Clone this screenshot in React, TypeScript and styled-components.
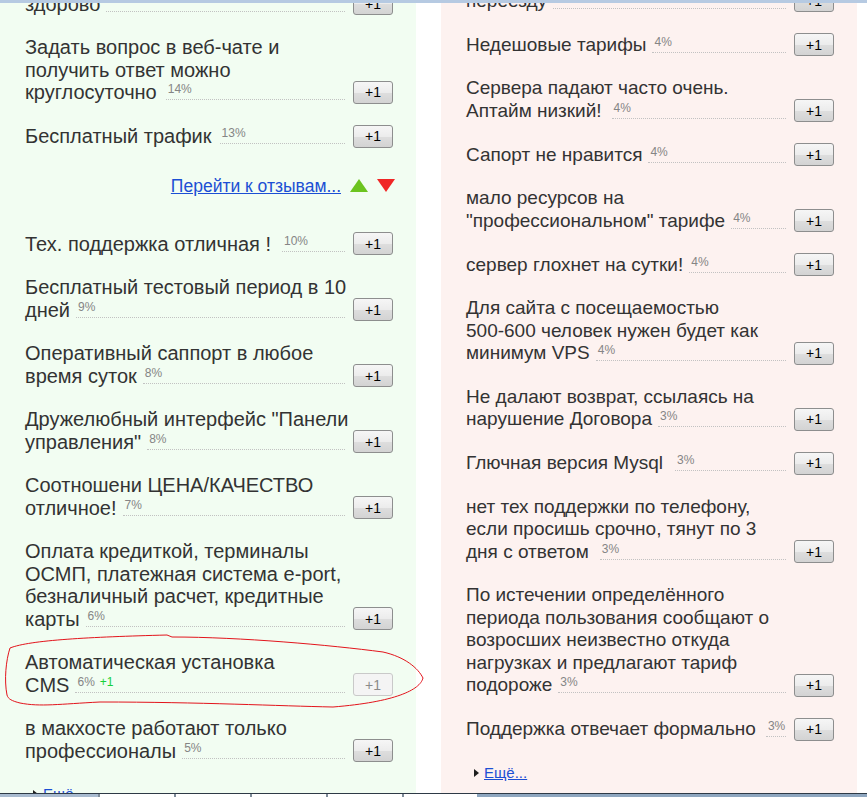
import React from "react";
import styled, { createGlobalStyle } from "styled-components";

type Item = {
  lines: string[];
  pct?: string;
  bonus?: string;
  voted?: boolean;
  sp?: number;
};

const pros: Item[] = [
  { lines: ["здорово"] },
  {
    lines: ["Задать вопрос в веб-чате и", "получить ответ можно", "круглосуточно"],
    pct: "14%",
    sp: 3,
  },
  { lines: ["Бесплатный трафик"], pct: "13%", sp: 2 },
];

const pros2: Item[] = [
  { lines: ["Тех. поддержка отличная !"], pct: "10%", sp: 5 },
  { lines: ["Бесплатный тестовый период в 10", "дней"], pct: "9%" },
  { lines: ["Оперативный саппорт в любое", "время суток"], pct: "8%" },
  { lines: ["Дружелюбный интерфейс \"Панели", "управления\""], pct: "8%" },
  { lines: ["Соотношени ЦЕНА/КАЧЕСТВО", "отличное!"], pct: "7%" },
  {
    lines: [
      "Оплата кредиткой, терминалы",
      "ОСМП, платежная система e-port,",
      "безналичный расчет, кредитные",
      "карты",
    ],
    pct: "6%",
  },
  { lines: ["Автоматическая установка", "CMS"], pct: "6%", bonus: "+1", voted: true },
  { lines: ["в макхосте работают только", "профессионалы"], pct: "5%" },
];

const cons: Item[] = [
  { lines: ["переезду"] },
  { lines: ["Недешовые тарифы"], pct: "4%" },
  { lines: ["Сервера падают часто очень.", "Аптайм низкий!"], pct: "4%", sp: 4 },
  { lines: ["Сапорт не нравится"], pct: "4%" },
  { lines: ["мало ресурсов на", "\"профессиональном\" тарифе"], pct: "4%" },
  { lines: ["сервер глохнет на сутки!"], pct: "4%" },
  {
    lines: ["Для сайта с посещаемостью", "500-600 человек нужен будет как", "минимум VPS"],
    pct: "4%",
  },
  { lines: ["Не далают возврат, ссылаясь на", "нарушение Договора"], pct: "3%" },
  { lines: ["Глючная версия Mysql"], pct: "3%", sp: 6 },
  {
    lines: ["нет тех поддержки по телефону,", "если просишь срочно, тянут по 3", "дня с ответом"],
    pct: "3%",
    sp: 5,
  },
  {
    lines: [
      "По истечении определённого",
      "периода пользования сообщают о",
      "возросших неизвестно откуда",
      "нагрузках и предлагают тариф",
      "подороже",
    ],
    pct: "3%",
  },
  { lines: ["Поддержка отвечает формально"], pct: "3%", sp: 4 },
];

const tabs = [74, 74, 74, 74, 73];

const GlobalStyle = createGlobalStyle`
  html, body {
    margin: 0;
    padding: 0;
    background: #ffffff;
  }
  body {
    font-family: "Liberation Sans", Arial, sans-serif;
  }
`;

const Page = styled.div`
  position: relative;
  width: 867px;
  height: 797px;
  overflow: hidden;
  display: flex;
  flex-direction: column;
  background: #ffffff;
`;

const TopBar = styled.div`
  height: 3px;
  flex-shrink: 0;
  background: #b6cae2;
`;

const Columns = styled.div`
  flex: 1;
  min-height: 0;
  display: flex;
  gap: 25px;
  overflow: hidden;
`;

const Panel = styled.div<{ $tone: "good" | "bad"; $scroll: number; $size: number }>`
  width: 416px;
  flex-shrink: 0;
  box-sizing: border-box;
  padding: 0 23px 0 25px;
  background: ${(p) => (p.$tone === "good" ? "#f2fdf2" : "#fdf2f0")};
  display: flex;
  flex-direction: column;
  gap: 21px;
  overflow: hidden;
  --text-size: ${(p) => p.$size}px;

  > :first-child {
    margin-top: ${(p) => -p.$scroll}px;
  }
`;

const Row = styled.div`
  display: flex;
  align-items: flex-end;
  gap: 8px;
  flex-shrink: 0;
`;

const Label = styled.div`
  flex: 1;
  min-width: 0;
  font-size: var(--text-size);
  line-height: 22.5px;
  color: #333333;
`;

const Line = styled.div`
  white-space: nowrap;
`;

const LastLine = styled.div`
  display: flex;
  align-items: flex-start;
  white-space: nowrap;
`;

const Leader = styled.span<{ $sp?: number }>`
  flex: 1;
  min-width: 20px;
  height: 19px;
  box-sizing: border-box;
  margin-left: ${(p) => 6 + (p.$sp ?? 0)}px;
  padding: 2px 0 0 2px;
  border-bottom: 1px dotted #c2c2c2;
  display: flex;
  align-items: flex-start;
  gap: 5px;
  font-size: 12px;
  line-height: 12px;
`;

const Pct = styled.span`
  color: #858585;
`;

const Bonus = styled.span`
  color: #19d03a;
`;

const Vote = styled.button<{ $voted?: boolean }>`
  flex-shrink: 0;
  width: 40px;
  height: 23px;
  padding: 0;
  box-sizing: border-box;
  font-family: "Liberation Sans", Arial, sans-serif;
  font-size: 14px;
  color: ${(p) => (p.$voted ? "#8a8a8a" : "#000000")};
  border: 1px solid ${(p) => (p.$voted ? "#c9c9c9" : "#8d8e8e")};
  border-radius: 3px;
  background: ${(p) =>
    p.$voted
      ? "#f4f4f4"
      : "linear-gradient(#f6f6f6, #ececec 50%, #dedede 51%, #d3d3d3)"};
`;

const NavRow = styled.div`
  display: flex;
  justify-content: flex-end;
  align-items: center;
  gap: 9px;
  padding: 6px 0 14px;
  margin-right: -2px;
  line-height: 22.5px;
  flex-shrink: 0;
`;

const NavLink = styled.a`
  font-size: 17.5px;
  color: #1c4fd4;
  text-decoration: underline;
`;

const More = styled.div`
  display: flex;
  align-items: center;
  gap: 5px;
  padding-left: 8px;
  font-size: 15px;
  line-height: 22.5px;
  flex-shrink: 0;
`;

const Caret = styled.span`
  width: 0;
  height: 0;
  border-left: 5px solid #1e1e1e;
  border-top: 4px solid transparent;
  border-bottom: 4px solid transparent;
`;

const MoreLink = styled.a`
  color: #1c4fd4;
  text-decoration: underline;
`;

const BottomBar = styled.div`
  height: 4px;
  flex-shrink: 0;
  box-sizing: border-box;
  border-top: 1px solid #2e3a46;
  display: flex;
  background: #8ea6bf;
`;

const Tab = styled.div<{ $w: number; $open?: boolean }>`
  width: ${(p) => p.$w}px;
  flex-shrink: 0;
  background: ${(p) => (p.$open ? "#ffffff" : "#a9bbd0")};
  border-left: ${(p) => (p.$open ? "2px solid #7f8c99" : "none")};
`;

const Annotation = styled.svg`
  position: absolute;
  left: 0;
  top: 0;
  pointer-events: none;
`;

const Opinion = ({ item }: { item: Item }) => {
  const head = item.lines.slice(0, -1);
  const last = item.lines[item.lines.length - 1];
  return (
    <Row>
      <Label>
        {head.map((l) => (
          <Line key={l}>{l}</Line>
        ))}
        <LastLine>
          <span>{last}</span>
          <Leader $sp={item.sp}>
            {item.pct && <Pct>{item.pct}</Pct>}
            {item.bonus && <Bonus>{item.bonus}</Bonus>}
          </Leader>
        </LastLine>
      </Label>
      <Vote $voted={item.voted} disabled={item.voted}>
        +1
      </Vote>
    </Row>
  );
};

const Triangle = ({ up }: { up?: boolean }) => (
  <svg width="18" height="13" viewBox="0 0 18 13">
    {up ? (
      <polygon points="9,0 18,13 0,13" fill="#6cc41f" />
    ) : (
      <polygon points="0,0 18,0 9,13" fill="#f02626" />
    )}
  </svg>
);

const ShowMore = () => (
  <More>
    <Caret />
    <MoreLink href="#">Ещё...</MoreLink>
  </More>
);

export default function App() {
  return (
    <Page>
      <GlobalStyle />
      <TopBar />
      <Columns>
        <Panel $tone="good" $scroll={11} $size={20}>
          {pros.map((it, i) => (
            <Opinion key={i} item={it} />
          ))}
          <NavRow>
            <NavLink href="#">Перейти к отзывам...</NavLink>
            <Triangle up />
            <Triangle />
          </NavRow>
          {pros2.map((it, i) => (
            <Opinion key={i} item={it} />
          ))}
          <ShowMore />
        </Panel>
        <Panel $tone="bad" $scroll={14} $size={19}>
          {cons.map((it, i) => (
            <Opinion key={i} item={it} />
          ))}
          <ShowMore />
        </Panel>
      </Columns>
      <BottomBar>
        <Tab $w={98} />
        {tabs.map((w, i) => (
          <Tab key={i} $w={w} $open />
        ))}
      </BottomBar>
      <Annotation width="867" height="797" viewBox="0 0 867 797">
        <path
          d="M7,695 C4,680 6,660 10,648 C30,640 90,637 167,635 L172,637 C240,637 330,645 383,652 C405,657 418,668 423,678 C420,690 395,702 333,707 C280,706 200,702 100,702 C60,704 40,707 20,703 C12,701 8,699 7,695 Z"
          fill="none"
          stroke="#e3141c"
          strokeWidth="1"
        />
      </Annotation>
    </Page>
  );
}
